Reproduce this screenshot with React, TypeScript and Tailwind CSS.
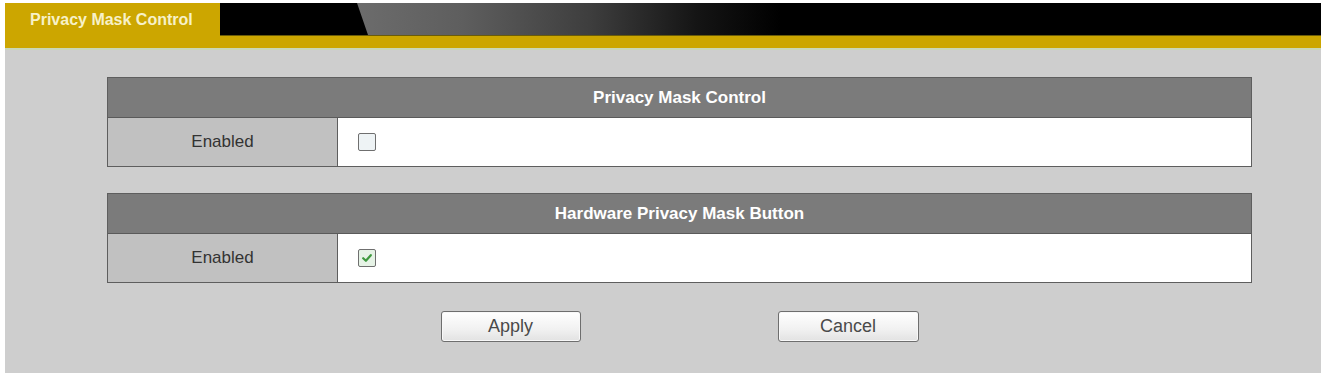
import React from "react";

function Checkbox({ checked }: { checked?: boolean }) {
  return (
    <div
      className={
        "w-[18px] h-[18px] border border-[#6f6f6f] rounded-[2px] flex items-center justify-center " +
        (checked ? "bg-[#e6f3e6]" : "bg-[#eef3f5]")
      }
    >
      {checked && (
        <svg width="12" height="12" viewBox="0 0 12 12">
          <path d="M2.2 6.2 L4.9 8.8 L9.8 3.2" fill="none" stroke="#3f9a3f" strokeWidth="2.2" strokeLinecap="round" strokeLinejoin="round" />
        </svg>
      )}
    </div>
  );
}

function Section({ title, checked, className }: { title: string; checked?: boolean; className?: string }) {
  return (
    <div className={"w-[1145px] border border-[#5e5e5e] " + (className ?? "")}>
      <div className="h-[40px] bg-[#7b7b7b] border-b border-[#5a5a5a] flex items-center justify-center text-white font-bold text-[17px]">
        {title}
      </div>
      <div className="h-[48px] flex">
        <div className="w-[230px] bg-[#c1c1c1] border-r border-[#5e5e5e] flex items-center justify-center text-[17px] text-[#333]">
          Enabled
        </div>
        <div className="flex-1 bg-white flex items-center pl-[20px]">
          <Checkbox checked={checked} />
        </div>
      </div>
    </div>
  );
}

function Btn({ label, w }: { label: string; w: string }) {
  return (
    <button
      className={
        w +
        " h-[31px] rounded-[3px] border border-[#6e6e6e] bg-[linear-gradient(to_bottom,#ffffff,#f1f1f1_60%,#e2e2e2)] shadow-[inset_0_0_0_1px_#f8f8f8] text-[18px] text-[#4a4a4a] flex items-center justify-center"
      }
    >
      {label}
    </button>
  );
}

export default function App() {
  return (
    <div className="w-[1323px] h-[373px] bg-white pl-[5px] pr-[2px] pt-[3px] overflow-hidden font-['Liberation_Sans',Arial,sans-serif]">
      <div className="flex flex-col h-full">
        {/* header */}
        <div className="h-[45px] bg-[#cca600] flex items-start">
          <div className="w-[215px] h-[33px] flex items-center pl-[25px] text-[16px] font-bold text-[#f7f1c8]">
            Privacy Mask Control
          </div>
          <div className="flex-1 h-[33px] bg-black border-b border-[#6b5c08]">
            <svg width="1101" height="32" viewBox="0 0 1101 32" className="block">
              <defs>
                <linearGradient id="g" x1="137" y1="0" x2="560" y2="0" gradientUnits="userSpaceOnUse">
                  <stop offset="0" stopColor="#6c6c6c" />
                  <stop offset="0.25" stopColor="#5e5e5e" />
                  <stop offset="0.55" stopColor="#3e3e3e" />
                  <stop offset="0.8" stopColor="#151515" />
                  <stop offset="1" stopColor="#000" />
                </linearGradient>
              </defs>
              <rect width="1101" height="32" fill="#000" />
              <polygon points="137,0 1101,0 1101,32 148,32" fill="url(#g)" />
            </svg>
          </div>
        </div>
        <div className="h-[2px] bg-[#c9d6b8]" />
        {/* content */}
        <div className="flex-1 bg-[#cecece] pl-[102px] pt-[27px] flex flex-col">
          <Section title="Privacy Mask Control" />
          <Section title="Hardware Privacy Mask Button" checked className="mt-[26px]" />
          <div className="w-[1145px] mt-[28px] flex justify-center gap-[197px]">
            <Btn label="Apply" w="w-[140px]" />
            <Btn label="Cancel" w="w-[141px]" />
          </div>
        </div>
      </div>
    </div>
  );
}
